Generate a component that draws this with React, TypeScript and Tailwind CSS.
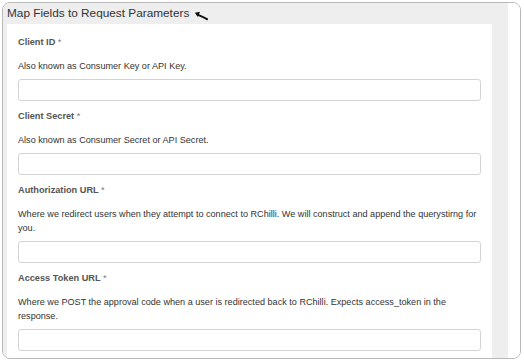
const fields = [
  { label: "Client ID", help: "Also known as Consumer Key or API Key." },
  { label: "Client Secret", help: "Also known as Consumer Secret or API Secret." },
  {
    label: "Authorization URL",
    help: "Where we redirect users when they attempt to connect to RChilli. We will construct and append the querystirng for you.",
  },
  {
    label: "Access Token URL",
    help: "Where we POST the approval code when a user is redirected back to RChilli. Expects access_token in the response.",
  },
];

function Arrow() {
  return (
    <svg width="14" height="10" viewBox="0 0 14 10" className="ml-[5px] mt-[4px]">
      <path d="M13 8.2 C9.5 6.2 6.5 4.8 3.5 3.6" fill="none" stroke="#111" strokeWidth="2" strokeLinecap="round" />
      <path d="M0.8 1.8 L6 0.8 L4 6 Z" fill="#111" />
    </svg>
  );
}

export default function App() {
  return (
    <div className="w-[524px] h-[362px] bg-white p-[2px] font-['Liberation_Sans',Arial,sans-serif] overflow-hidden">
      <div className="w-[519px] h-[357px] border border-[#b9b9b9] rounded-[8px] flex overflow-hidden">
        {/* Gray column */}
        <div className="w-[505px] bg-[#eeeeee] flex flex-col">
          <div className="h-[21px] pl-[4px] flex items-center">
            <span className="text-[11.8px] text-[#333] leading-none">Map Fields to Request Parameters</span>
            <Arrow />
          </div>
          <div className="ml-[4px] w-[485px] flex-1 bg-white px-[11px] pt-[11px]">
            {fields.map((f, i) => (
              <div key={f.label} className={i > 0 ? "mt-[8px]" : ""}>
                <div className="text-[9.2px] leading-[14px] font-bold text-[#555]">
                  {f.label} <span className="font-normal text-[#777]">*</span>
                </div>
                <p className="mt-[10px] text-[9.1px] leading-[14px] text-[#333]">{f.help}</p>
                <div className="mt-[6px] h-[22px] border border-[#d4d4d4] rounded-[3px] bg-white" />
              </div>
            ))}
          </div>
        </div>
        <div className="flex-1 bg-white" />
      </div>
    </div>
  );
}
